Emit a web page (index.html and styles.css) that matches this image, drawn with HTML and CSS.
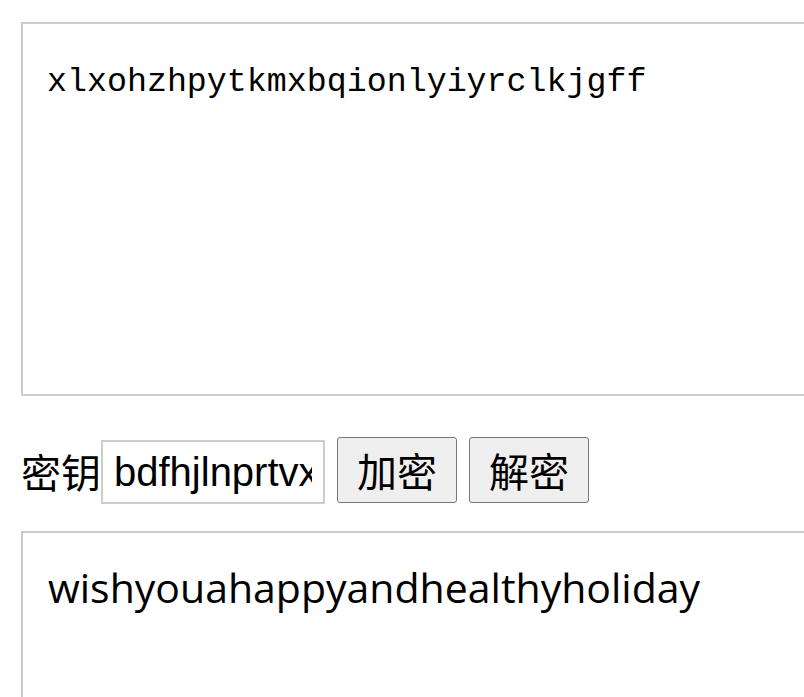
FILE: index.html
```html
<!DOCTYPE html>
<html lang="zh-CN">
<head>
<meta charset="utf-8">
<title>加密解密</title>
<link rel="stylesheet" href="styles.css">
</head>
<body>
<main class="page">
  <textarea class="box box-cipher" readonly>xlxohzhpytkmxbqionlyiyrclkjgff</textarea>
  <div class="controls">
    <label class="key-label" for="key">密钥</label>
    <input id="key" class="key-input" type="text" value="bdfhjlnprtvx">
    <button class="btn" type="button">加密</button>
    <button class="btn" type="button">解密</button>
  </div>
  <textarea class="box box-plain" readonly>wishyouahappyandhealthyholiday</textarea>
</main>
</body>
</html>
```

FILE: styles.css
```css
html, body {
  margin: 0;
  padding: 0;
  background: #ffffff;
  overflow: hidden;
}

.page {
  display: flex;
  flex-direction: column;
  align-items: flex-start;
  padding: 22px 0 0 21px;
  width: 820px;
}

.box {
  box-sizing: border-box;
  width: 800px;
  border: 2px solid #cccccc;
  border-radius: 0;
  resize: none;
  outline: none;
  color: #000000;
  background: #ffffff;
  margin: 0;
  overflow: hidden;
}

.box-cipher {
  height: 374px;
  font-family: "Liberation Mono", "DejaVu Sans Mono", monospace;
  font-size: 33.3px;
  line-height: 40px;
  padding: 38px 24px 0 24px;
}

.box-plain {
  height: 300px;
  margin-top: 27px;
  font-family: "Open Sans", "Noto Sans", sans-serif;
  font-size: 41px;
  line-height: 54px;
  padding: 27px 25px 0 25px;
}

.controls {
  display: flex;
  align-items: flex-start;
  margin-top: 40px;
  height: 68px;
}

.key-label {
  font-family: "Noto Sans CJK SC", sans-serif;
  font-size: 40px;
  line-height: 58px;
  margin-top: 6px;
  color: #000000;
}

.key-input {
  box-sizing: border-box;
  width: 224px;
  height: 64px;
  margin: 4px 12px 0 0;
  padding: 0 11px;
  border: 2px solid #cccccc;
  border-radius: 0;
  outline: none;
  font-family: "Liberation Sans", Arial, sans-serif;
  font-size: 40px;
  color: #000000;
  background: #ffffff;
}

.btn {
  box-sizing: border-box;
  height: 66px;
  margin-top: 1px;
  padding: 0 19px;
  border: 1px solid #767676;
  border-radius: 3px;
  background: #efefef;
  font-family: "Noto Sans CJK SC", sans-serif;
  font-size: 40px;
  line-height: 48px;
  color: #000000;
}

.btn + .btn {
  margin-left: 12px;
}
```
